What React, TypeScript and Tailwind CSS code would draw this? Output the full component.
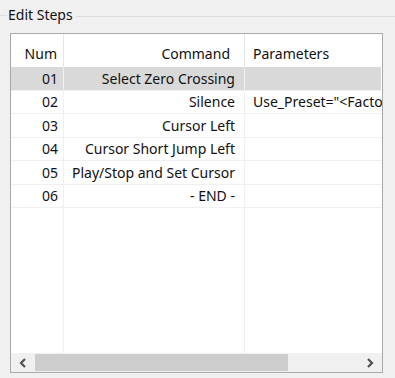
import React from 'react';

// ── Data ──────────────────────────────────────────────────────────────────────

const steps = [
  { num: '01', command: 'Select Zero Crossing', params: '' },
  { num: '02', command: 'Silence', params: 'Use_Preset="<Facto' },
  { num: '03', command: 'Cursor Left', params: '' },
  { num: '04', command: 'Cursor Short Jump Left', params: '' },
  { num: '05', command: 'Play/Stop and Set Cursor', params: '' },
  { num: '06', command: '- END -', params: '' },
];

const font = { fontFamily: '"Noto Sans", "Open Sans", sans-serif' };

// ── Component ─────────────────────────────────────────────────────────────────

export default function App() {
  const selected = 0;

  return (
    <div className="w-[395px] h-[378px] bg-[#f0f0f0] text-[14px] text-[#111] overflow-hidden" style={font}>
      {/* Group box caption + frame line */}
      <div className="flex items-center h-[33px] pb-[2px]">
        <div className="w-[7px] h-px bg-[#dddddd]" />
        <span className="leading-none px-[1px] -mt-[1px]">Edit Steps</span>
        <div className="flex-1 h-px bg-[#dddddd] ml-[2px] mt-[1px]" />
      </div>

      {/* List view */}
      <div className="ml-[10px] w-[373px] h-[340px] border border-[#a9a9a9] bg-white flex flex-col overflow-hidden">
        {/* Header */}
        <div className="flex h-[33px] shrink-0">
          <div className="w-[53px] border-r border-[#e5e5e5] flex items-center justify-end pr-[6px] pt-[5px]">Num</div>
          <div className="w-[181px] border-r border-[#e5e5e5] flex items-center justify-end pr-[14px] pt-[5px]">Command</div>
          <div className="flex-1 flex items-center pl-[8px] pt-[5px]">Parameters</div>
        </div>

        {/* Rows */}
        {steps.map((s, i) => (
          <div
            key={s.num}
            className={`flex h-[23.5px] shrink-0 border-b border-[#f0f0f0] ${i === selected ? 'bg-[#d9d9d9] mr-[1px]' : ''}`}
          >
            <div className="w-[53px] border-r border-[#f0f0f0] flex items-center justify-end pr-[5px]">{s.num}</div>
            <div className="w-[181px] border-r border-[#f0f0f0] flex items-center justify-end pr-[9px] whitespace-nowrap">
              {s.command}
            </div>
            <div className="flex-1 flex items-center pl-[8px] whitespace-nowrap overflow-hidden">{s.params}</div>
          </div>
        ))}

        {/* Empty space with column guides */}
        <div className="flex flex-1">
          <div className="w-[53px] border-r border-[#f0f0f0]" />
          <div className="w-[181px] border-r border-[#f0f0f0]" />
          <div className="flex-1" />
        </div>

        {/* Horizontal scrollbar */}
        <div className="flex h-[19px] shrink-0 bg-[#f0f0f0] items-stretch">
          <div className="w-[24px] flex items-center justify-center">
            <svg width="8" height="10" viewBox="0 0 8 10">
              <path d="M6 1 L2 5 L6 9" fill="none" stroke="#505050" strokeWidth="2.2" />
            </svg>
          </div>
          <div className="w-[253px] bg-[#cdcdcd] my-[1px]" />
          <div className="flex-1" />
          <div className="w-[24px] flex items-center justify-center">
            <svg width="8" height="10" viewBox="0 0 8 10">
              <path d="M2 1 L6 5 L2 9" fill="none" stroke="#505050" strokeWidth="2.2" />
            </svg>
          </div>
        </div>
      </div>
    </div>
  );
}
